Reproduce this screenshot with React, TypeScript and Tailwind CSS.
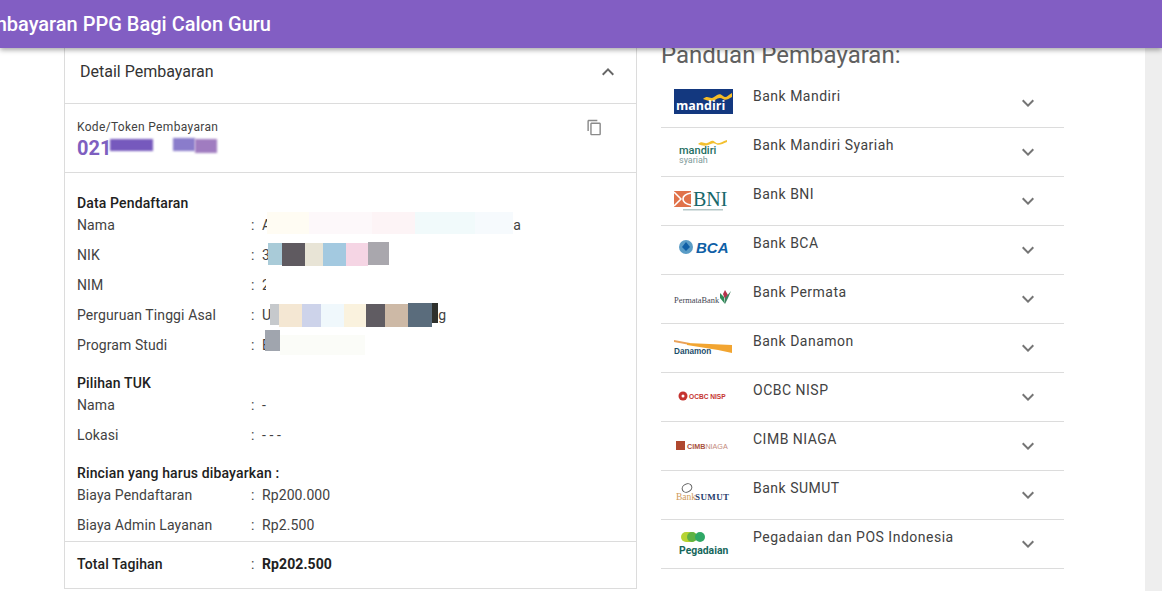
import type {ReactNode} from 'react';
import {MdContentCopy, MdExpandLess, MdExpandMore} from 'react-icons/md';

const logos: Record<string, ReactNode> = {
  mandiri: (
    <>
      <rect x="1" y="3" width="59" height="25" fill="#13387f" />
      <path d="M30 13c5-5 7 1 11-2s6-4 9-1 5-1 9-3v4c-4 2-6 4-9 2s-5-1-8 1-7 1-12-1z" fill="#f5bc27" />
      <text x="3" y="24" fontFamily="Open Sans" fontWeight="700" fontSize="12.5" fill="#fff">mandiri</text>
    </>
  ),
  syariah: (
    <>
      <path d="M25 9c4-4 6 0 9-1s5-4 8-1 6 0 12-2v2c-5 2-8 4-11 2s-5 0-8 1-6 1-10-1z" fill="#f3c02f" />
      <text x="6" y="19" fontFamily="Roboto" fontWeight="500" fontSize="11" fill="#1f6f62">mandiri</text>
      <text x="6" y="28" fontFamily="Roboto" fontSize="9" fill="#7f9b9a">syariah</text>
    </>
  ),
  bni: (
    <>
      <rect x="1" y="7" width="17" height="16" fill="#e0724a" />
      <path d="M18 9c-6 1-8 3-8 6s2 5 8 6M1 8c3 3 5 5 7 7-2 2-4 4-7 7" fill="none" stroke="#fff" strokeWidth="1.6" />
      <text x="20" y="22" fontFamily="Liberation Serif" fontSize="20" fill="#17686b">BNI</text>
      <rect x="10" y="25" width="40" height="1.5" fill="#b5c7c7" />
    </>
  ),
  bca: (
    <>
      <circle cx="13" cy="14" r="7" fill="#5a9cc6" />
      <path d="M13 9l4 5-4 4-4-4z" fill="#0f5fa6" />
      <text x="23" y="20" fontFamily="Liberation Sans" fontWeight="700" fontStyle="italic" fontSize="15" fill="#0f5fa6">BCA</text>
    </>
  ),
  permata: (
    <>
      <text x="1" y="21" fontFamily="Liberation Serif" fontSize="8.4" fill="#3f4650">PermataBank</text>
      <path d="M47 11l4 4 1 7-5-6z" fill="#2e8a57" />
      <path d="M52 8l3 5-3 4-2-5z" fill="#b5314a" />
      <path d="M58 9l-3 7-3 6 0-6z" fill="#3d7f5d" />
    </>
  ),
  danamon: (
    <>
      <path d="M1 9l16 3 0 2-16-3z" fill="#e9a25a" />
      <path d="M14 12l45 2 0 8-14-3-31-5z" fill="#f2a531" />
      <text x="1" y="23" fontFamily="Liberation Sans" fontWeight="700" fontSize="8.2" fill="#1d4e6b">Danamon</text>
    </>
  ),
  ocbc: (
    <>
      <circle cx="10" cy="16" r="4.5" fill="#c5332f" />
      <circle cx="10" cy="16" r="1.5" fill="#fff" />
      <text x="16" y="19" fontFamily="Liberation Sans" fontWeight="700" fontSize="6.6" fill="#c5332f">OCBC NISP</text>
    </>
  ),
  cimb: (
    <>
      <rect x="3" y="12" width="9" height="9" fill="#b0482f" />
      <text x="14" y="19.5" fontFamily="Liberation Sans" fontWeight="700" fontSize="7.2" fill="#a8503c">
        CIMB<tspan fontWeight="400" fill="#c48a7c">NIAGA</tspan>
      </text>
    </>
  ),
  sumut: (
    <>
      <ellipse cx="14" cy="10" rx="5" ry="4" fill="none" stroke="#555" strokeWidth="1" transform="rotate(-25 14 10)" />
      <text x="3" y="22" fontFamily="Liberation Serif" fontSize="9.5" fill="#cf9a5a">Bank</text>
      <text x="22" y="22" fontFamily="Liberation Serif" fontWeight="700" fontSize="9" letterSpacing="0.4" fill="#27406b">SUMUT</text>
    </>
  ),
  pegadaian: (
    <>
      <rect x="8" y="5" width="16" height="10" rx="5" fill="#b7d334" />
      <circle cx="19" cy="10" r="5" fill="#5fb244" />
      <circle cx="27" cy="10" r="5" fill="#2fa866" />
      <text x="6" y="27" fontFamily="Roboto" fontWeight="700" fontSize="10.4" fill="#17675c">Pegadaian</text>
    </>
  ),
};

const banks = [
  {name: 'Bank Mandiri', logo: 'mandiri'},
  {name: 'Bank Mandiri Syariah', logo: 'syariah'},
  {name: 'Bank BNI', logo: 'bni'},
  {name: 'Bank BCA', logo: 'bca'},
  {name: 'Bank Permata', logo: 'permata'},
  {name: 'Bank Danamon', logo: 'danamon'},
  {name: 'OCBC NISP', logo: 'ocbc'},
  {name: 'CIMB NIAGA', logo: 'cimb'},
  {name: 'Bank SUMUT', logo: 'sumut'},
  {name: 'Pegadaian dan POS Indonesia', logo: 'pegadaian'},
];

function Row({label, children, last}: {label: string; children: ReactNode; last?: boolean}) {
  return (
    <div className={`flex text-sm leading-5 tracking-[0.1px] text-[#424242] ${last ? 'h-[26px]' : 'h-[30px]'}`}>
      <div className="w-[174px] shrink-0">{label}</div>
      <div className="w-[11px] shrink-0">:</div>
      <div className="flex items-start">{children}</div>
    </div>
  );
}

function Heading({children}: {children: ReactNode}) {
  return <div className="mb-[2px] text-sm leading-5 font-medium tracking-[0.14px] text-[#212121]">{children}</div>;
}

export default function App() {
  return (
    <div className="h-screen overflow-hidden bg-[#eeeeee] font-['Roboto',sans-serif]">
      <header className="relative z-10 flex h-12 w-full items-center overflow-hidden bg-[#825ec3] shadow-[0_2px_5px_rgba(0,0,0,0.35)]">
        <div className="flex w-[271px] shrink-0 justify-end whitespace-nowrap text-xl font-medium text-white">
          Pembayaran PPG Bagi Calon Guru
        </div>
      </header>

      <main className="flex h-[543px] w-[1145px] bg-white pl-16">
        <section className="h-[541px] w-[573px] shrink-0 border-x border-b border-[#dcdcdc]">
          <div className="flex h-14 items-center justify-between border-b border-[#dcdcdc] pb-[7px] pl-[15px] pr-4">
            <span className="text-base text-[#333333]">Detail Pembayaran</span>
            <MdExpandLess size={24} className="text-[#666666]" />
          </div>

          <div className="flex h-[69px] justify-between border-b border-[#dcdcdc] pl-3 pr-[33px] pt-[14px]">
            <div>
              <div className="text-xs leading-[18px] tracking-[0.33px] text-[#424242]">Kode/Token Pembayaran</div>
              <div className="flex items-start text-xl leading-6 font-bold text-[#7e5fc0]">
                021
                <span className="-ml-[1px] mt-[3px] h-[12px] w-[43px] bg-[#7659bd] blur-[1px]" />
                <span className="ml-[20px] mt-[2px] h-[13px] w-[22px] bg-[#8a7ccb] blur-[1px]" />
                <span className="mt-[3px] h-[14px] w-[22px] bg-[#a07cc0] blur-[1px]" />
              </div>
            </div>
            <MdContentCopy size={17} className="mt-[1px] text-[#8a8a8a]" />
          </div>

          <div className="h-[369px] border-b border-[#dcdcdc] pl-3 pt-5">
            <Heading>Data Pendaftaran</Heading>
            <Row label="Nama">
              A
              <span className="-ml-[4px] mt-[-3px] h-[22px] w-[42px] bg-[#fffcf3]" />
              <span className="mt-[-3px] h-[22px] w-[63px] bg-[#fdf8fa]" />
              <span className="mt-[-3px] h-[22px] w-[43px] bg-[#fdf4f6]" />
              <span className="mt-[-3px] h-[22px] w-[60px] bg-[#f1fafb]" />
              <span className="mt-[-3px] h-[22px] w-[38px] bg-[#f6fafd]" />
              a
            </Row>
            <Row label="NIK">
              3
              <span className="-ml-[2px] mt-[-2px] h-[22px] w-[14px] bg-[#a9cbd8]" />
              <span className="mt-[-2px] h-[23px] w-[23px] bg-[#5f5a60]" />
              <span className="mt-[-2px] h-[23px] w-[18px] bg-[#e8e4d6]" />
              <span className="mt-[-2px] h-[23px] w-[23px] bg-[#a3c9e0]" />
              <span className="mt-[-2px] h-[23px] w-[22px] bg-[#f5d5e4]" />
              <span className="mt-[-3px] h-[23px] w-[21px] bg-[#a9a7ad]" />
            </Row>
            <Row label="NIM">
              2
              <span className="-ml-[4px] h-5 w-[40px] bg-white" />
            </Row>
            <Row label="Perguruan Tinggi Asal">
              U
              <span className="-ml-[1px] mt-[-1px] h-[21px] w-[9px] bg-[#c6c9cc]" />
              <span className="mt-[-1px] h-[23px] w-[23px] bg-[#f4e7d3]" />
              <span className="mt-[-1px] h-[23px] w-[19px] bg-[#cdd3ea]" />
              <span className="mt-[-1px] h-[23px] w-[23px] bg-[#f0f8fc]" />
              <span className="mt-[-1px] h-[23px] w-[22px] bg-[#faf2de]" />
              <span className="mt-[-1px] h-[23px] w-[19px] bg-[#605c62]" />
              <span className="mt-[-1px] h-[23px] w-[23px] bg-[#cdb9a6]" />
              <span className="mt-[-2px] h-[24px] w-[24px] bg-[#5a6c7c]" />
              <span className="mt-[-2px] h-[20px] w-[6px] bg-[#2e302c]" />
              g
            </Row>
            <Row label="Program Studi">
              E
              <span className="-ml-[5px] mt-[-5px] h-[21px] w-[15px] bg-[#a0a5ae]" />
              <span className="h-5 w-[85px] bg-[#fbfcf8]" />
            </Row>

            <div className="mt-2">
              <Heading>Pilihan TUK</Heading>
            </div>
            <Row label="Nama">-</Row>
            <Row label="Lokasi">- - -</Row>

            <div className="mt-2">
              <Heading>Rincian yang harus dibayarkan :</Heading>
            </div>
            <Row label="Biaya Pendaftaran">Rp200.000</Row>
            <Row label="Biaya Admin Layanan" last>
              Rp2.500
            </Row>
          </div>

          <div className="flex pl-3 pt-3 text-sm leading-5 font-medium tracking-[0.1px] text-[#212121]">
            <div className="w-[174px]">Total Tagihan</div>
            <div className="w-[11px] font-normal text-[#424242]">:</div>
            <div className="font-bold">Rp202.500</div>
          </div>
        </section>

        <section className="ml-6 mt-[-7px] w-[403px] shrink-0">
          <h2 className="h-[30px] text-2xl leading-7 text-[#616161]">Panduan Pembayaran:</h2>
          <ul className="mt-2">
            {banks.map((bank) => (
              <li key={bank.name} className="flex h-[49px] border-b border-[#dcdcdc] pl-3 pr-6 pt-[7px]">
                <svg width="60" height="30" viewBox="0 0 60 30" className="shrink-0">
                  {logos[bank.logo]}
                </svg>
                <span className="ml-5 flex-1 text-sm leading-5 tracking-[0.5px] text-[#424242]">{bank.name}</span>
                <MdExpandMore size={24} className="mt-[5px] text-[#757575]" />
              </li>
            ))}
          </ul>
        </section>
      </main>
    </div>
  );
}
